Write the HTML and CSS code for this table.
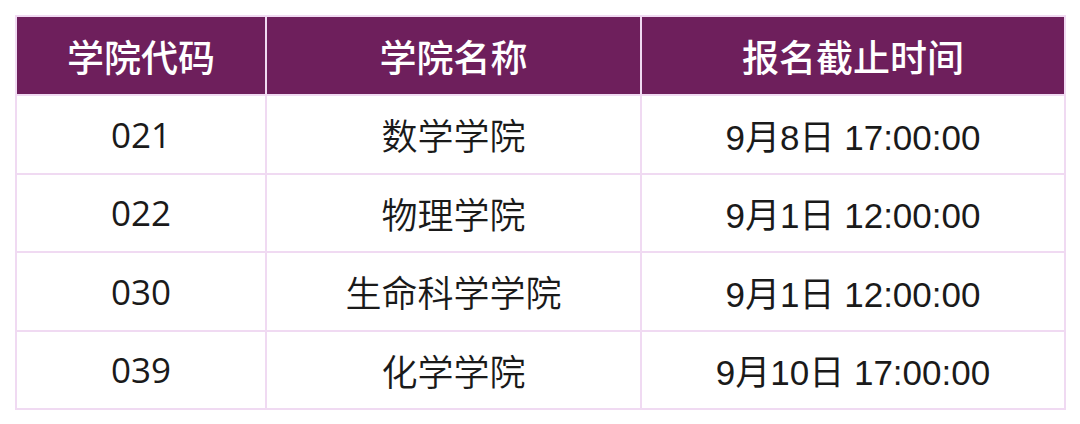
FILE: index.html
```html
<!DOCTYPE html>
<html lang="zh">
<head>
<meta charset="utf-8">
<link rel="stylesheet" href="styles.css">
</head>
<body>
<table class="tbl">
  <colgroup>
    <col class="c1"><col class="c2"><col class="c3">
  </colgroup>
  <thead>
    <tr><th>学院代码</th><th>学院名称</th><th>报名截止时间</th></tr>
  </thead>
  <tbody>
    <tr><td class="num">021</td><td>数学学院</td><td class="date">9月8日 17:00:00</td></tr>
    <tr><td class="num">022</td><td>物理学院</td><td class="date">9月1日 12:00:00</td></tr>
    <tr><td class="num">030</td><td>生命科学学院</td><td class="date">9月1日 12:00:00</td></tr>
    <tr><td class="num">039</td><td>化学学院</td><td class="date">9月10日 17:00:00</td></tr>
  </tbody>
</table>
</body>
</html>
```
FILE: styles.css
```css
html, body { margin: 0; padding: 0; background: #fff; }
body { padding: 15px 0 0 15px; }
.tbl {
  border-collapse: collapse;
  table-layout: fixed;
  width: 1049px;
  font-family: "Noto Sans CJK SC", "Noto Sans", sans-serif;
  color: #1a1a1a;
}
.c1 { width: 250px; }
.c2 { width: 375px; }
.c3 { width: 424px; }
.tbl th, .tbl td {
  border: 2px solid #f0daf2;
  text-align: center;
  padding: 0;
}
.tbl th {
  background: #6e1f5c;
  color: #fff;
  font-weight: 500;
  font-size: 37px;
  height: 77px;
}
.tbl td {
  font-size: 36px;
  font-weight: 350;
  height: 76.5px;
}
.tbl td.num { font-family: "Open Sans", "Noto Sans CJK SC", sans-serif; font-size: 35px; font-weight: 400; }
.tbl td.date { font-family: "Liberation Sans", "Noto Sans CJK SC", sans-serif; font-size: 35px; font-weight: 400; }
```
